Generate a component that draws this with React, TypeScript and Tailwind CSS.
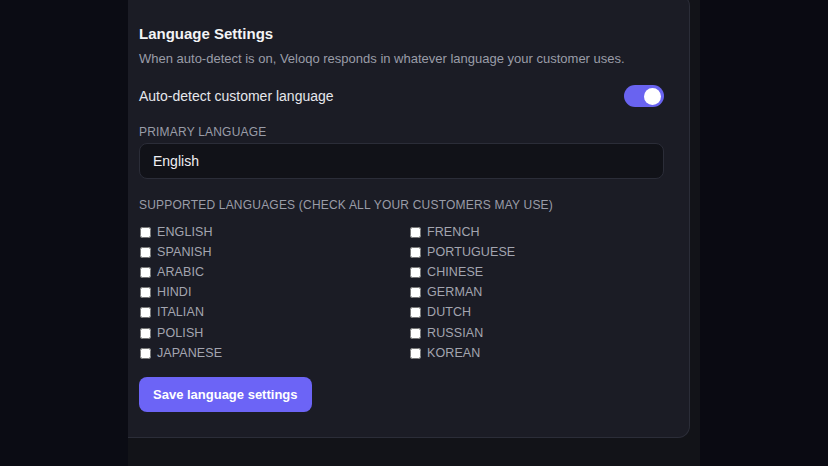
import React from "react";

const left = ["English", "Spanish", "Arabic", "Hindi", "Italian", "Polish", "Japanese"];
const right = ["French", "Portuguese", "Chinese", "German", "Dutch", "Russian", "Korean"];

function Row({ label }: { label: string }) {
  return (
    <label className="flex items-center h-[20.2px] gap-[6px]">
      <input type="checkbox" className="w-[11px] h-[11px] m-0 ml-[1px] accent-white" />
      <span className="text-[12.5px] uppercase tracking-[0.1px] text-[#a3a5b0]">{label}</span>
    </label>
  );
}

export default function App() {
  return (
    <div
      className="flex w-[828px] h-[466px] overflow-hidden bg-[#0a0a12]"
      style={{ fontFamily: "'Liberation Sans', Arial, sans-serif" }}
    >
      <div className="w-[128px] h-full bg-[#0b0c14]" />
      <div className="w-[572px] h-full bg-[#121318]">
        <div className="w-[562px] mt-[-6px] h-[444px] bg-[#1b1c25] border border-l-0 border-[#2b2d38] rounded-r-[12px] pl-[11px] pr-[25px] pt-[28px]">
          <h2 className="text-[15px] leading-[22px] font-bold text-[#f3f4f6]">Language Settings</h2>
          <p className="mt-[4px] text-[13px] leading-[20px] text-[#9a9ca8]">
            When auto-detect is on, Veloqo responds in whatever language your customer uses.
          </p>
          <div className="mt-[16px] flex items-center justify-between h-[22px]">
            <span className="text-[14px] text-[#e6e7ec]">Auto-detect customer language</span>
            <div className="w-[40px] h-[22px] rounded-full bg-[#6963f0] flex items-center justify-end pr-[3px]">
              <div className="w-[17px] h-[17px] rounded-full bg-white" />
            </div>
          </div>
          <div className="mt-[17px] text-[12px] leading-[16px] uppercase tracking-[0.2px] text-[#9a9ca8]">
            Primary language
          </div>
          <div className="mt-[3px] h-[36px] rounded-[8px] bg-[#111218] border border-[#2b2d38] flex items-center pl-[13px] text-[14px] text-[#eeeff3]">
            English
          </div>
          <div className="mt-[18px] text-[12px] leading-[16px] uppercase tracking-[0.2px] text-[#9a9ca8]">
            Supported languages (check all your customers may use)
          </div>
          <div className="mt-[9px] grid grid-cols-[270px_1fr]">
            <div className="flex flex-col">
              {left.map((l) => (
                <Row key={l} label={l} />
              ))}
            </div>
            <div className="flex flex-col">
              {right.map((l) => (
                <Row key={l} label={l} />
              ))}
            </div>
          </div>
          <button className="mt-[14px] h-[35px] px-[14px] rounded-[8px] bg-[#6c64f6] text-white text-[13px] font-bold">
            Save language settings
          </button>
        </div>
      </div>
    </div>
  );
}
